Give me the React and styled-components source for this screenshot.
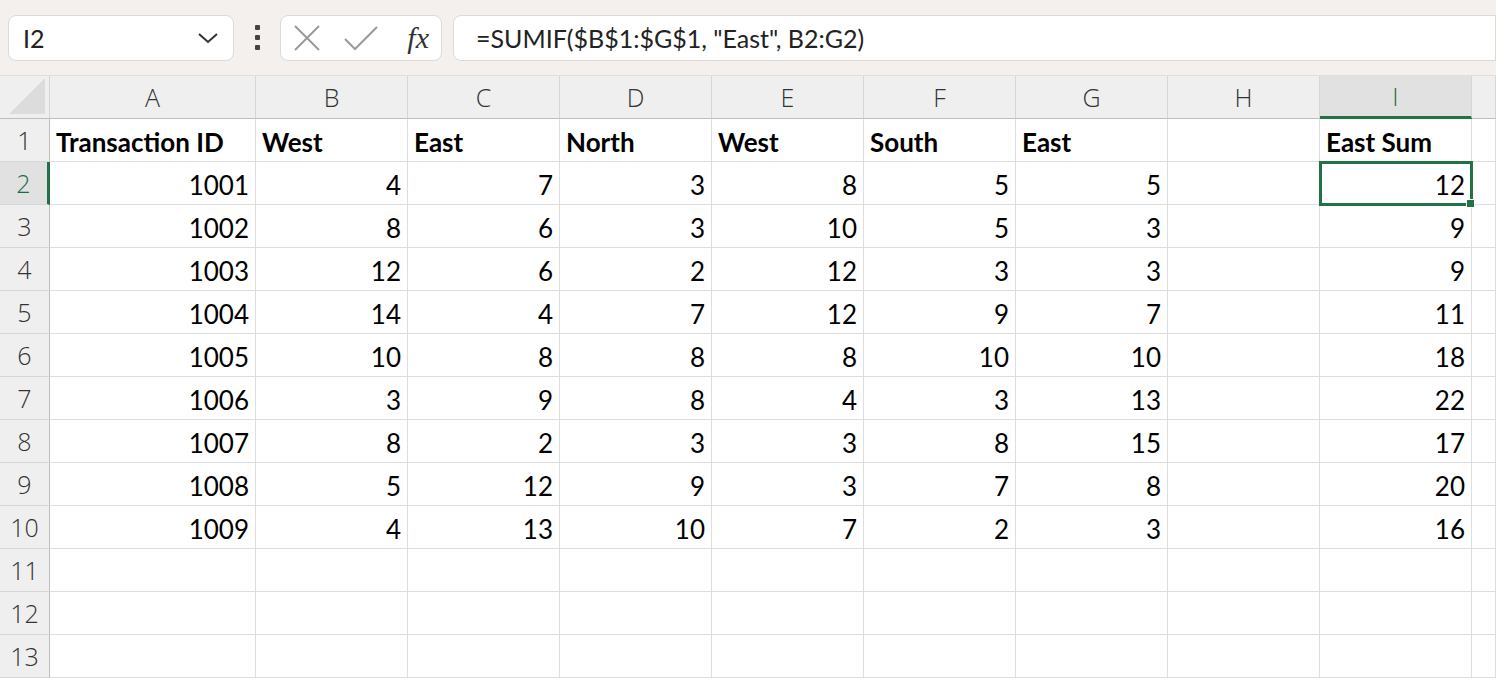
import React from "react";
import styled, { createGlobalStyle } from "styled-components";

const G = createGlobalStyle`
  body { margin:0; background:#fff; font-family: Lato, "Noto Sans", sans-serif; overflow:hidden; }
`;
const Bar = styled.div`
  height:76px; background:#f3f0ee; display:flex; align-items:center; gap:0; padding-left:8px; box-sizing:border-box;
  border-bottom:1px solid #e2dedb;
`;
const Box = styled.div`
  height:46px; background:#fff; border:1px solid #dcd9d7; border-radius:8px; box-sizing:border-box;
  display:flex; align-items:center; width:${p=>p.w}; flex:${p=>p.grow?1:"none"};
  padding:0 ${p=>p.pad||"10px"}; gap:${p=>p.gap||"0"}; font-size:25px; color:#222;
  border-top-right-radius:${p=>p.grow?0:"8px"}; border-bottom-right-radius:${p=>p.grow?0:"8px"};
`;
const Dots = styled.div`
  width:46px; display:flex; flex-direction:column; align-items:center; gap:5px;
  span{ width:5px; height:5px; background:#444; border-radius:1px; }
`;
const FX = styled.span`font-family:"Liberation Serif",serif; font-style:italic; font-size:30px; color:#333; margin-left:auto;`;
const Grid = styled.div`
  display:grid; grid-template-columns:50px 206px repeat(8,152px) 1fr;
  grid-auto-rows:43px;
`;
const Corner = styled.div`
  background:#efefef; border-right:1px solid #d4d4d4; border-bottom:1px solid #bdbdbd; position:relative; overflow:hidden;
  &:after{content:"";position:absolute;right:4px;bottom:4px;border-left:36px solid transparent;border-bottom:36px solid #dcdcdc;}
`;
const ColH = styled.div`
  background:${p=>p.sel?"#e1e1e1":"#efefef"}; border-right:1px solid #d6d6d6;
  border-bottom:${p=>p.sel?"3px solid #217346":"1px solid #bdbdbd"}; box-sizing:border-box;
  display:flex; align-items:center; justify-content:center; font-size:25px; color:${p=>p.sel?"#1d6b40":"#333"};
  font-family:"Open Sans",sans-serif; font-weight:300;
`;
const RowH = styled.div`
  background:${p=>p.sel?"#e1e1e1":"#efefef"}; border-bottom:1px solid #d6d6d6;
  border-right:${p=>p.sel?"3px solid #217346":"1px solid #bdbdbd"}; box-sizing:border-box;
  display:flex; align-items:center; justify-content:center; font-size:25px; color:${p=>p.sel?"#1d6b40":"#333"};
  font-family:"Open Sans",sans-serif; font-weight:300;
`;
const Cell = styled.div`
  border-right:1px solid #dedede; border-bottom:1px solid #dedede; box-sizing:border-box;
  display:flex; align-items:center; justify-content:${p=>p.num?"flex-end":"flex-start"};
  padding:0 6px; font-size:26px; font-weight:${p=>p.b?700:400}; color:#000; white-space:nowrap;
  position:relative; padding-top:4px;
  ${p=>p.sel&&`outline:3px solid #217346; outline-offset:-2px; z-index:2;
    &:after{content:"";position:absolute;right:-4px;bottom:-4px;width:7px;height:7px;background:#217346;border:1px solid #fff;}`}
`;

const cols=["A","B","C","D","E","F","G","H","I",""];
const head=["Transaction ID","West","East","North","West","South","East","","East Sum",""];
const data=[
[1001,4,7,3,8,5,5,12],[1002,8,6,3,10,5,3,9],[1003,12,6,2,12,3,3,9],[1004,14,4,7,12,9,7,11],
[1005,10,8,8,8,10,10,18],[1006,3,9,8,4,3,13,22],[1007,8,2,3,3,8,15,17],[1008,5,12,9,3,7,8,20],[1009,4,13,10,7,2,3,16]];

export default function App(){
  const rows=[];
  rows.push(<RowH key="r1">1</RowH>);
  head.forEach((h,i)=>rows.push(<Cell key={"h"+i} b>{h}</Cell>));
  for(let r=0;r<12;r++){
    const d=data[r];
    rows.push(<RowH key={"rh"+r} sel={r===0}>{r+2}</RowH>);
    for(let c=0;c<10;c++){
      let v="";
      if(d){ if(c<7) v=d[c]; else if(c===8) v=d[7]; }
      rows.push(<Cell key={r+"-"+c} num sel={r===0&&c===8}>{v}</Cell>);
    }
  }
  return <>
    <G/>
    <Bar>
      <Box w="226px" pad="14px"><span style={{flex:1}}>I2</span>
        <svg width="22" height="14" viewBox="0 0 22 14"><path d="M2 3l9 8 9-8" fill="none" stroke="#333" strokeWidth="2"/></svg>
      </Box>
      <Dots><span/><span/><span/></Dots>
      <Box w="162px" pad="12px" gap="22px">
        <svg width="28" height="28" viewBox="0 0 28 28"><path d="M2 2l24 24M26 2L2 26" stroke="#9a9a9a" strokeWidth="2"/></svg>
        <svg width="36" height="28" viewBox="0 0 36 28"><path d="M2 15l10 10L34 3" fill="none" stroke="#9a9a9a" strokeWidth="2"/></svg>
        <FX>fx</FX>
      </Box>
      <div style={{width:11}}/>
      <Box grow pad="22px">=SUMIF($B$1:$G$1, "East", B2:G2)</Box>
    </Bar>
    <Grid>
      <Corner/>
      {cols.map((c,i)=><ColH key={i} sel={c==="I"}>{c}</ColH>)}
      {rows}
    </Grid>
  </>;
}
